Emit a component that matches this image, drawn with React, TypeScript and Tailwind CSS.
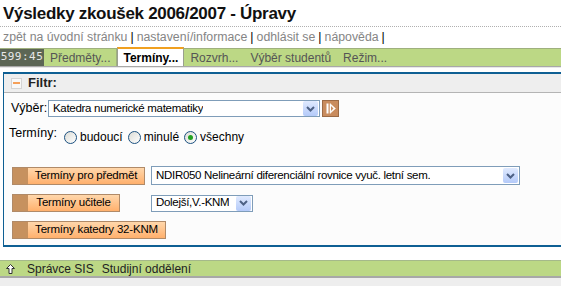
import { ReactNode } from "react";

const Radio = ({ checked, label }: { checked?: boolean; label: string }) => (
  <label className="flex items-center gap-[3px]">
    <span className="flex h-[13px] w-[13px] items-center justify-center rounded-full border border-[#1c5180] bg-gradient-to-br from-[#dcdcd6] to-white">
      {checked && <span className="h-[5px] w-[5px] rounded-full bg-[#21a121]" />}
    </span>
    <span>{label}</span>
  </label>
);

const DropArrow = () => (
  <span className="flex h-[15px] w-[15px] shrink-0 items-center justify-center rounded-[2px] bg-gradient-to-b from-[#e0eafe] to-[#b4caf9]">
    <svg width="9" height="6" viewBox="0 0 9 6">
      <path d="M1 1 L4.5 4.5 L8 1" stroke="#4d6185" strokeWidth="2" fill="none" />
    </svg>
  </span>
);

const Select = ({ value, className }: { value: string; className: string }) => (
  <div
    className={`flex items-center justify-between border border-[#7f9db9] bg-white pl-[4px] pr-[1px] text-[11.5px] tracking-[-0.3px] ${className}`}
  >
    <span className="truncate">{value}</span>
    <DropArrow />
  </div>
);

const OrangeButton = ({ children, className }: { children: ReactNode; className: string }) => (
  <div className={`flex h-[18px] border border-[#b08a68] ${className}`}>
    <span className="w-[15px] bg-[#c6915f]" />
    <span className="flex flex-1 items-center justify-center bg-gradient-to-b from-[#ffd7ab] to-[#ffb06c] text-[11.5px] leading-none tracking-[-0.2px]">
      {children}
    </span>
  </div>
);

const Tab = ({ children, active, sep }: { children: ReactNode; active?: boolean; sep?: boolean }) =>
  active ? (
    <div className="-mt-[2px] flex h-[19px] items-center border-x border-t-2 border-[#9aa08f] border-t-[#f0a020] bg-white px-[5px] font-bold text-black">
      {children}
    </div>
  ) : (
    <div
      className={`flex h-[17px] items-center px-[6px] text-[#555] ${sep ? "border-r border-[#9fb07e]" : ""}`}
    >
      {children}
    </div>
  );

export default function App() {
  return (
    <div className="h-[287px] w-[561px] overflow-hidden bg-white font-['Liberation_Sans',Arial,sans-serif] text-[12px] text-black">
      <h1 className="border-b border-dotted border-[#b0b0b0] px-[3px] pt-[4px] pb-[3px] text-[17px] font-bold leading-[19px] tracking-[-0.3px] text-[#111]">
        Výsledky zkoušek 2006/2007 - Úpravy
      </h1>
      <div className="flex h-[19px] items-center px-[3px] pt-[1px] text-[12.3px] text-[#858585]">
        <span>zpět na úvodní stránku</span>
        <span className="px-[3px] text-black">|</span>
        <span>nastavení/informace</span>
        <span className="px-[3px] text-black">|</span>
        <span>odhlásit se</span>
        <span className="px-[3px] text-black">|</span>
        <span>nápověda</span>
        <span className="pl-[3px] text-black">|</span>
      </div>
      <div className="mt-[2px] flex h-[18px] items-end border-t border-[#9fb07e] bg-[#bcd885] text-[12px]">
        <div className="flex h-[17px] w-[44px] items-center justify-center bg-[#5c6655] font-['DejaVu_Sans_Mono',monospace] text-[11px] tracking-[0.5px] text-[#e8e8e8]">
          599:45
        </div>
        <Tab sep>Předměty...</Tab>
        <Tab active>Termíny...</Tab>
        <Tab>Rozvrh...</Tab>
        <Tab>Výběr studentů</Tab>
        <Tab>Režim...</Tab>
      </div>
      <div className="h-[2px] border-t border-[#a8a8a8] bg-[#e8e8e8]" />

      <div className="ml-[3px] mt-[4px] w-[570px] border-l border-t-2 border-b-2 border-[#0e5f93]">
        <div className="flex h-[19px] items-center gap-[6px] border-b border-[#b4b4b4] bg-[#eeeeee] pl-[7px] text-[13px] font-bold text-[#222]">
          <span className="flex h-[11px] w-[11px] items-center justify-center border border-[#d4d4d4] bg-[#f8f8f8]">
            <span className="h-[2px] w-[7px] bg-[#f5a05a]" />
          </span>
          Filtr:
        </div>
        <div className="bg-[#fcfcfc] pb-[6px] pl-[5px] pt-[7px] text-[12.5px]">
          <div className="flex h-[17px] items-center">
            <span className="w-[39px] pl-[2px]">Výběr:</span>
            <Select value="Katedra numerické matematiky" className="h-[17px] w-[272px]" />
            <span className="ml-[2px] flex h-[17px] w-[17px] items-center justify-center border border-[#9c6a45] bg-[#c98c5e]">
              <svg width="10" height="11" viewBox="0 0 10 11">
                <rect x="0.5" y="0.5" width="2" height="10" fill="#fff" />
                <path d="M4 0.5 L9.5 5.5 L4 10.5 Z" fill="#fff" stroke="#fff" strokeWidth="0.5" />
                <path d="M5 3 L7.5 5.5 L5 8 Z" fill="#c98c5e" />
              </svg>
            </span>
          </div>
          <div className="mt-[9px] flex items-start">
            <span className="w-[55px] leading-[15px]">Termíny:</span>
            <div className="mt-[2px] flex items-center gap-[5px] text-[12px]">
              <Radio label="budoucí" />
              <Radio label="minulé" />
              <Radio checked label="všechny" />
            </div>
          </div>
          <div className="mt-[20px] flex items-center gap-[6px] pl-[3px]">
            <OrangeButton className="w-[133px]">Termíny pro předmět</OrangeButton>
            <Select
              value="NDIR050 Nelineární diferenciální rovnice vyuč. letní sem."
              className="h-[19px] w-[369px]"
            />
          </div>
          <div className="mt-[9px] flex items-center gap-[31px] pl-[3px]">
            <OrangeButton className="w-[108px]">Termíny učitele</OrangeButton>
            <Select value="Dolejší,V.-KNM" className="h-[17px] w-[102px]" />
          </div>
          <div className="mt-[9px] flex pl-[3px]">
            <OrangeButton className="w-[154px]">Termíny katedry 32-KNM</OrangeButton>
          </div>
        </div>
      </div>

      <div className="mt-[13px] flex h-[18px] items-center border-t border-b-2 border-t-[#a5b98a] border-b-[#a8a8a8] bg-[#bcd885] pl-[6px] text-[12px] text-[#222]">
        <svg width="9" height="10" viewBox="0 0 9 10">
          <path d="M4.5 0.5 L8.5 4.5 L6 4.5 L6 9.5 L3 9.5 L3 4.5 L0.5 4.5 Z" fill="#fff" stroke="#333" strokeWidth="1" />
        </svg>
        <span className="ml-[12px]">Správce SIS</span>
        <span className="ml-[8px]">Studijní oddělení</span>
      </div>
      <div className="h-[8px] bg-[#eeeeee]" />
    </div>
  );
}
